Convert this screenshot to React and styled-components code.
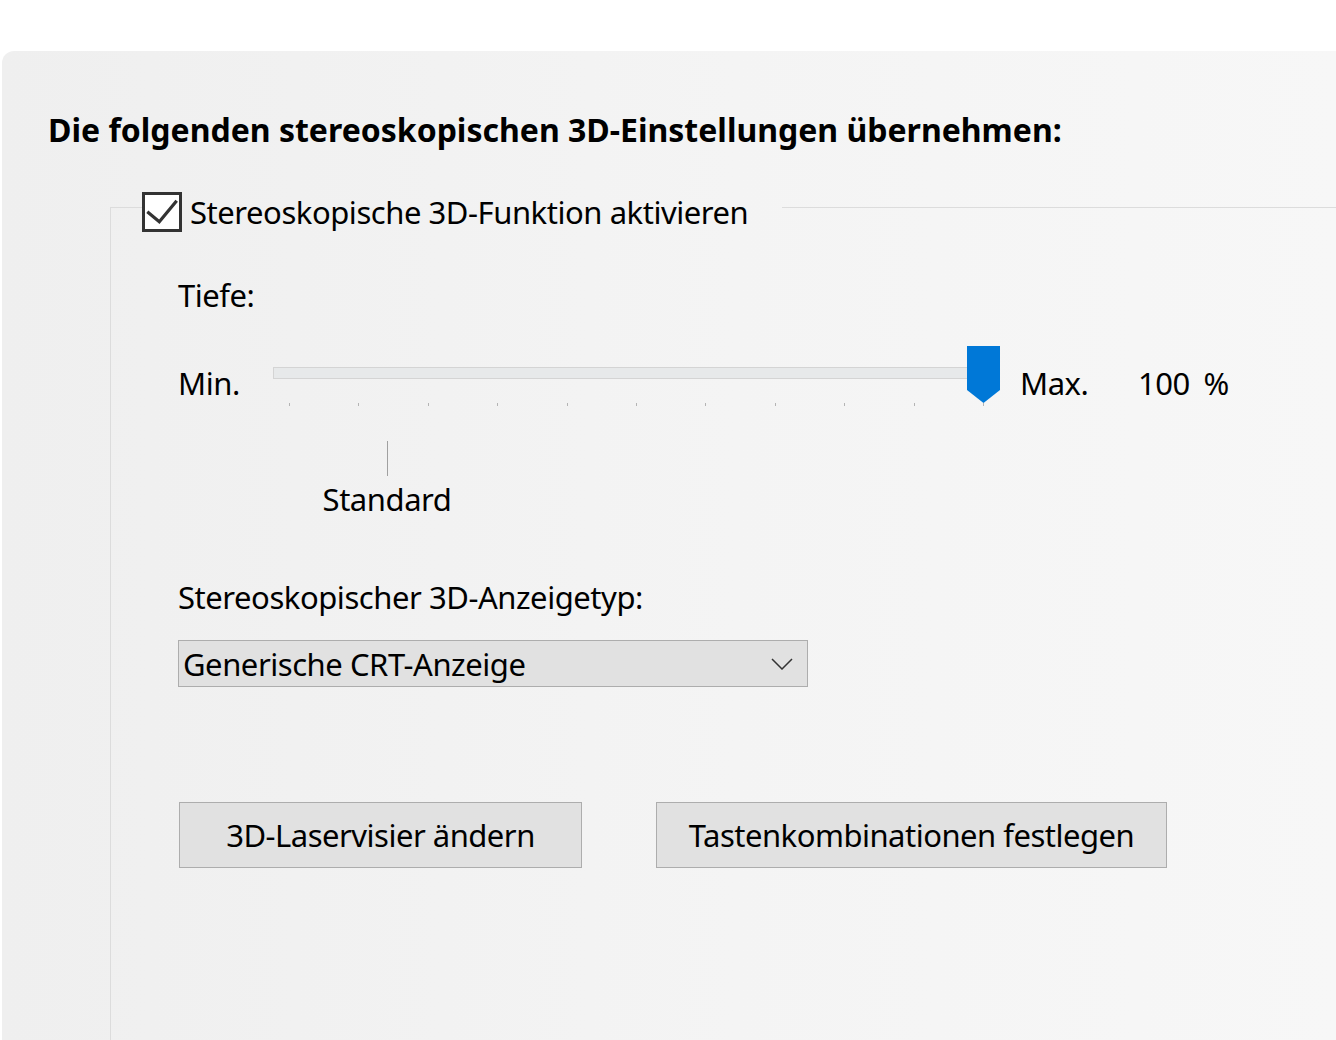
import styled, { createGlobalStyle } from "styled-components";

const GlobalStyle = createGlobalStyle`
  html, body {
    margin: 0;
    padding: 0;
    background: #ffffff;
  }
  body {
    font-family: "Noto Sans", "DejaVu Sans", sans-serif;
    color: #000;
  }
`;

const ticks = Array.from({ length: 11 }, (_, i) => i);

const Page = styled.div`
  padding: 51px 0 0 2px;
  width: 1336px;
  height: 1040px;
  box-sizing: border-box;
  overflow: hidden;
`;

const Panel = styled.div`
  display: flex;
  flex-direction: column;
  height: 989px;
  box-sizing: border-box;
  padding: 59px 0 0 46px;
  border-top-left-radius: 12px;
  background: linear-gradient(to right, #efefef, #f4f4f4 55%, #f7f7f7);
`;

const Heading = styled.h1`
  margin: 0;
  font-size: 32px;
  line-height: 40px;
  font-weight: 700;
  letter-spacing: 0;
`;

const GroupBox = styled.fieldset`
  flex: 1;
  margin: 32px 0 0 62px;
  padding: 0 0 0 31px;
  border: 1px solid #dcdcdc;
  border-right: none;
  border-bottom: none;
  min-width: 0;
`;

const Legend = styled.legend`
  display: flex;
  align-items: center;
  gap: 8px;
  padding: 10px 34px 0 0;
  font-size: 31px;
  line-height: 40px;
  letter-spacing: -0.45px;
`;

const Content = styled.div`
  padding-left: 36px;
`;

const CheckBox = styled.span`
  display: inline-flex;
  width: 40px;
  height: 40px;
  box-sizing: border-box;
  border: 3px solid #333333;
  background: #ffffff;
`;

const Label = styled.div`
  font-size: 31px;
  line-height: 40px;
  letter-spacing: -0.45px;
  margin-top: ${(p) => p.$top || 0}px;
`;

const SliderRow = styled.div`
  display: flex;
  align-items: flex-start;
  margin-top: 31px;
`;

const EndLabel = styled.span`
  font-size: 31px;
  line-height: 40px;
  letter-spacing: -0.45px;
  word-spacing: 6px;
  margin-top: 17px;
  width: ${(p) => p.$width}px;
  flex: none;
  white-space: nowrap;
`;

const Slider = styled.div`
  position: relative;
  width: 727px;
  height: 60px;
  flex: none;
  margin-right: 20px;
`;

const Track = styled.div`
  margin-top: 21px;
  height: 12px;
  box-sizing: border-box;
  border: 1px solid #d4d4d4;
  background: #e7e9ea;
`;

const TickRow = styled.div`
  display: flex;
  justify-content: space-between;
  margin: 24px 16px 0;
`;

const Tick = styled.span`
  width: 1px;
  height: 3px;
  background: #b4b4b4;
`;

const Thumb = styled.svg`
  position: absolute;
  right: 0;
  top: 0;
`;

const MarkerAnchor = styled.div`
  width: 0;
  margin: 35px 0 0 209px;
  display: flex;
  flex-direction: column;
  align-items: center;
`;

const MarkerLine = styled.span`
  width: 1px;
  height: 35px;
  background: #a0a0a0;
  flex: none;
`;

const MarkerText = styled.span`
  margin-top: 3px;
  font-size: 31px;
  line-height: 40px;
  letter-spacing: -0.45px;
  white-space: nowrap;
`;

const Select = styled.div`
  display: flex;
  align-items: center;
  justify-content: space-between;
  width: 630px;
  height: 47px;
  box-sizing: border-box;
  margin-top: 23px;
  padding: 0 14px 0 4px;
  border: 1px solid #adadad;
  background: #e1e1e1;
  font-size: 31px;
  line-height: 40px;
  letter-spacing: -0.45px;
`;

const ButtonRow = styled.div`
  display: flex;
  gap: 74px;
  margin: 115px 0 0 1px;
`;

const Button = styled.button`
  width: ${(p) => p.$width}px;
  height: 66px;
  box-sizing: border-box;
  border: 1px solid #adadad;
  background: #e1e1e1;
  font-family: inherit;
  font-size: 31px;
  letter-spacing: -0.5px;
  color: #000;
  padding: 0;
`;

export default function App() {
  return (
    <>
      <GlobalStyle />
      <Page>
        <Panel>
          <Heading>Die folgenden stereoskopischen 3D-Einstellungen übernehmen:</Heading>
          <GroupBox>
            <Legend>
              <CheckBox>
                <svg width="34" height="34" viewBox="0 0 34 34">
                  <path
                    d="M2.3 16.7 L14.3 26.7 L31.7 5.7"
                    fill="none"
                    stroke="#333333"
                    strokeWidth="3.2"
                  />
                </svg>
              </CheckBox>
              Stereoskopische 3D-Funktion aktivieren
            </Legend>

            <Content>
              <Label $top={43}>Tiefe:</Label>

              <SliderRow>
                <EndLabel $width={95}>Min.</EndLabel>
                <Slider>
                  <Track />
                  <TickRow>
                    {ticks.map((t) => (
                      <Tick key={t} />
                    ))}
                  </TickRow>
                  <Thumb width="33" height="57" viewBox="0 0 33 57">
                    <path d="M0 0 H33 V44 L16.5 57 L0 44 Z" fill="#0078d7" />
                  </Thumb>
                </Slider>
                <EndLabel $width={118}>Max.</EndLabel>
                <EndLabel>100 %</EndLabel>
              </SliderRow>

              <MarkerAnchor>
                <MarkerLine />
                <MarkerText>Standard</MarkerText>
              </MarkerAnchor>

              <Label $top={58}>Stereoskopischer 3D-Anzeigetyp:</Label>
              <Select>
                <span>Generische CRT-Anzeige</span>
                <svg width="22" height="12" viewBox="0 0 22 12">
                  <path d="M1 1 L11 11 L21 1" fill="none" stroke="#333" strokeWidth="1.5" />
                </svg>
              </Select>

              <ButtonRow>
                <Button $width={403}>3D-Laservisier ändern</Button>
                <Button $width={511}>Tastenkombinationen festlegen</Button>
              </ButtonRow>
            </Content>
          </GroupBox>
        </Panel>
      </Page>
    </>
  );
}
